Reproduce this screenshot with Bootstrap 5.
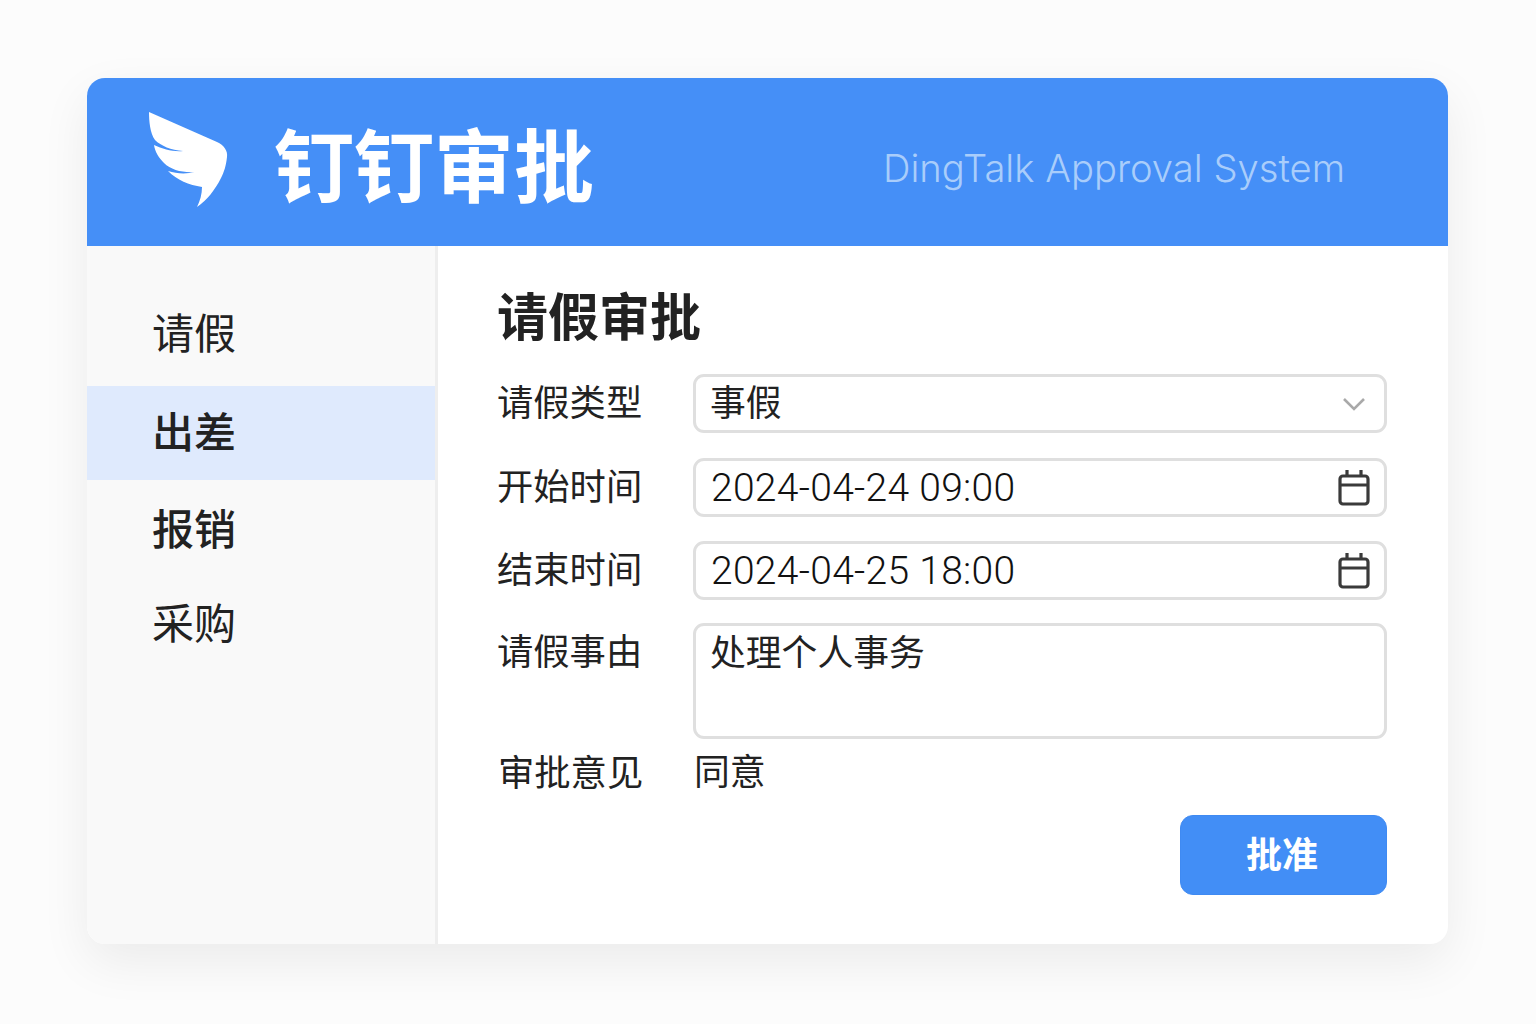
<!DOCTYPE html>
<html lang="zh-CN">
<head>
<meta charset="utf-8">
<title>钉钉审批</title>
<link href="https://cdn.jsdelivr.net/npm/bootstrap@5.3.0/dist/css/bootstrap.min.css" rel="stylesheet">
<style>
html,body{height:100%}
body{background:#fcfcfc;font-family:Inter,"Noto Sans CJK SC",sans-serif;color:#222;padding:78px 88px 80px 87px;overflow:hidden}
.shell{height:866px;border-radius:18px;background:#fff;box-shadow:0 18px 50px rgba(0,0,0,.07);overflow:hidden}
.head{height:168px;background:#458ff7;color:#fff;padding-left:60px;padding-right:103px}
.brand-mark{width:82px;height:98px;margin-right:45px;margin-top:-4px;flex:none}
.brand-name{font-size:80px;font-weight:700;line-height:1;letter-spacing:0;margin-top:10px}
.brand-sub{font-size:38.2px;font-weight:300;color:#a9cdfb;margin-top:14px}
.body-row{height:698px}
.side{width:351px;background:#f9f9f9;border-right:3px solid #eee;padding-top:40px;flex:none}
.side-item{height:96px;padding-left:65px;font-size:42px;color:#222;display:flex;align-items:center;line-height:1;border:0;background:transparent;border-radius:0}
.side-first{height:100px}
.side-item.on{background:#dfeafd;font-weight:500;height:94px}
.side-strong{font-weight:500}
.main-pane{padding:36px 61px 0 59px;min-width:0}
.pane-title{font-size:51px;font-weight:700;line-height:72px;margin:0 0 20px;color:#222}
.field-row{display:flex;align-items:center;height:59px;margin-bottom:24px}
.row-one{margin-bottom:25px}
.row-three{margin-bottom:23px}
.field-label{width:196px;flex:none;font-size:36.3px;line-height:1;color:#222;font-weight:400;margin:0}
.box{flex:1;height:59px;border:3px solid #dfdfdf;border-radius:11px;background:#fff;padding:0 14px 0 14px;font-size:35.8px;color:#222;display:flex;align-items:center;justify-content:space-between;line-height:1}
.date-val{font-family:Roboto,sans-serif;font-size:39px;font-weight:300;letter-spacing:.3px;margin:2px 0 0 1px;color:#111}
.chev{margin-right:4px}
.row-tall{align-items:flex-start;height:116px;margin-bottom:0}
.row-tall .field-label{padding-top:11px}
.row-tall .box{height:116px;align-items:flex-start;padding-top:10px}
.row-plain{height:auto;margin:16px 0 0}
.plain-val{font-size:35.8px;line-height:1;margin-left:1px}
.row-plain .field-label{padding-left:1px}
.approve{width:207px;height:80px;background:#428ef6;border:1px solid #3f8af2;border-radius:13px;color:#fff;font-size:36px;font-weight:700;line-height:1;padding:0 3px 0 0}
.approve-wrap{margin-top:24px}
.ico{flex:none}
</style>
</head>
<body>
<div class="shell d-flex flex-column">
  <header class="head d-flex align-items-center">
    <svg class="brand-mark" viewBox="0 0 82 98" aria-hidden="true"><path fill="#fff" d="M2 1 L70 31 C77 34 81 40 80 46 C79 55 77 61 74 67 C68 79 60 89 50 96 C53 90 55 83 55 76 C42 74 30 69 21 60 C30 63 40 63 48 61 C36 62 24 59 17 52 C12 47 8 41 7 34 C16 38 26 41 36 40 C24 39 14 35 8 29 C3 22 2 10 2 1Z"/></svg>
    <div class="brand-name">钉钉审批</div>
    <div class="brand-sub ms-auto">DingTalk Approval System</div>
  </header>
  <div class="body-row d-flex">
    <nav class="side d-flex flex-column">
      <a class="side-item side-first pb-1 text-decoration-none">请假</a>
      <a class="side-item on text-decoration-none">出差</a>
      <a class="side-item side-strong pt-1 text-decoration-none">报销</a>
      <a class="side-item text-decoration-none">采购</a>
    </nav>
    <main class="main-pane flex-grow-1">
      <h1 class="pane-title">请假审批</h1>
      <div class="field-row row-one">
        <label class="field-label">请假类型</label>
        <div class="box"><span>事假</span>
          <svg class="ico chev" width="24" height="14" viewBox="0 0 24 14"><path d="M2 2l10 10L22 2" fill="none" stroke="#a9a9a9" stroke-width="2.6"/></svg>
        </div>
      </div>
      <div class="field-row">
        <label class="field-label">开始时间</label>
        <div class="box"><span class="date-val">2024-04-24 09:00</span>
          <svg class="ico" width="32" height="36" viewBox="0 0 32 36"><g fill="none" stroke="#3a3a3a" stroke-width="3.2"><rect x="2" y="6" width="28" height="28" rx="3"/><path d="M2 15h28M9 0v7M23 0v7"/></g></svg>
        </div>
      </div>
      <div class="field-row row-three">
        <label class="field-label">结束时间</label>
        <div class="box"><span class="date-val">2024-04-25 18:00</span>
          <svg class="ico" width="32" height="36" viewBox="0 0 32 36"><g fill="none" stroke="#3a3a3a" stroke-width="3.2"><rect x="2" y="6" width="28" height="28" rx="3"/><path d="M2 15h28M9 0v7M23 0v7"/></g></svg>
        </div>
      </div>
      <div class="field-row row-tall">
        <label class="field-label">请假事由</label>
        <div class="box">处理个人事务</div>
      </div>
      <div class="field-row row-plain">
        <span class="field-label">审批意见</span>
        <span class="plain-val">同意</span>
      </div>
      <div class="approve-wrap d-flex justify-content-end">
        <button class="btn approve" type="button">批准</button>
      </div>
    </main>
  </div>
</div>
<script src="https://cdn.jsdelivr.net/npm/bootstrap@5.3.0/dist/js/bootstrap.bundle.min.js"></script>
</body>
</html>
